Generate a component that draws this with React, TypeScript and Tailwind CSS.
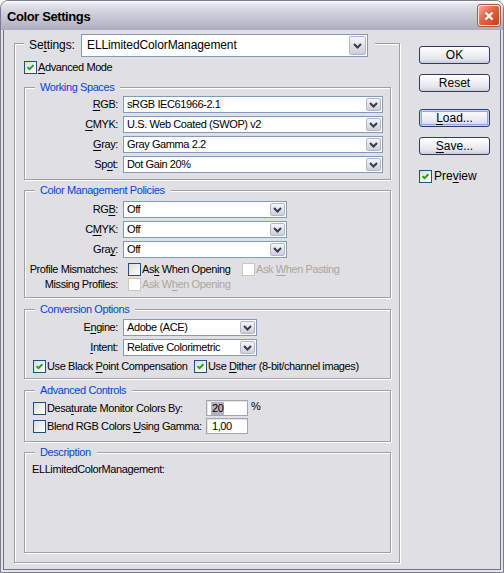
import React from "react";

type C = { children?: React.ReactNode };

const U = ({ children }: C) => (
  <span className="underline decoration-1 underline-offset-[2px]">{children}</span>
);

function Chevron() {
  return (
    <svg width="9" height="6" viewBox="0 0 9 6" className="block">
      <path d="M1 1L4.5 4.5L8 1" fill="none" stroke="#3a3a48" strokeWidth="2" />
    </svg>
  );
}

function Combo({
  value,
  className = "",
  textClass = "pl-[2px]",
  btnClass = "w-[15px]",
}: {
  value: React.ReactNode;
  className?: string;
  textClass?: string;
  btnClass?: string;
}) {
  return (
    <div className={`flex shrink-0 border border-[#7f9db9] bg-white p-[1px] ${className}`}>
      <div className={`flex min-w-0 flex-1 items-center overflow-hidden whitespace-nowrap ${textClass}`}>
        {value}
      </div>
      <div
        className={`flex items-center justify-center rounded-[2px] border border-[#b3b6cb] bg-gradient-to-b from-[#f6f6f9] to-[#cdcedd] ${btnClass}`}
      >
        <Chevron />
      </div>
    </div>
  );
}

function Check({ checked = false, disabled = false }: { checked?: boolean; disabled?: boolean }) {
  return (
    <span
      className={`flex h-[13px] w-[13px] shrink-0 items-center justify-center border ${
        disabled
          ? "border-[#cac8bb] bg-white"
          : "border-[#1c5180] bg-gradient-to-br from-[#dcdcd7] to-white"
      }`}
    >
      {checked && (
        <svg width="7" height="7" viewBox="0 0 7 7" className="block">
          <path d="M0.5 3.2L2.5 5.2L6.5 1.2" fill="none" stroke="#21a121" strokeWidth="2" />
        </svg>
      )}
    </span>
  );
}

function Group({
  title,
  className = "",
  children,
}: {
  title: string;
  className?: string;
  children?: React.ReactNode;
}) {
  return (
    <div
      className={`ml-[9px] w-[367px] shrink-0 border border-[#a0a0a4] shadow-[inset_1px_1px_0_#ffffff,1px_1px_0_#ffffff] ${className}`}
    >
      <div className="-mt-[7px] ml-[10px] w-fit bg-[#e0dfe3] pl-[5px] pr-[6px] leading-[13px] text-[#0046d5]">
        {title}
      </div>
      {children}
    </div>
  );
}

function Row({ label, children, className = "" }: { label: React.ReactNode; children?: React.ReactNode; className?: string }) {
  return (
    <div className={`flex items-center ${className}`}>
      <div className="w-[93px] shrink-0 text-right whitespace-nowrap">{label}</div>
      {children}
    </div>
  );
}

function Btn({ children, focus = false, className = "" }: { children: React.ReactNode; focus?: boolean; className?: string }) {
  return (
    <div
      className={`flex h-[18px] w-[71px] items-center justify-center rounded-[3px] border border-[#2b3f66] bg-[linear-gradient(to_bottom,#ffffff_0%,#f4f4f7_35%,#e2e2ea_80%,#c9c9d8_100%)] leading-none ${
        focus ? "shadow-[inset_0_0_0_1px_#c5d2f4,inset_0_0_0_2px_#90a8e4]" : ""
      } ${className}`}
    >
      {children}
    </div>
  );
}

export default function App() {
  return (
    <div className="flex h-[573px] w-[504px] select-none flex-col overflow-hidden rounded-t-[8px] border border-[#7b7b91] bg-[#e4e4eb] font-['Liberation_Sans',Arial,sans-serif] text-[11px] leading-[13px] tracking-[-0.4px] text-black">
      {/* Title bar */}
      <div className="flex h-[29px] shrink-0 items-center bg-[linear-gradient(to_bottom,#ffffff_0px,#e6e6ed_3px,#d6d6e0_9px,#c5c5d4_17px,#b7b7c9_24px,#acacc0_29px)] pl-[6px] pr-[3px]">
        <div className="flex-1 pt-[1px] text-[13px] font-bold tracking-[-0.4px] text-black">Color Settings</div>
        <div className="flex h-[21px] w-[22px] items-center justify-center rounded-[3px] border border-[#fbe7e2] bg-[linear-gradient(135deg,#f3ae98_0%,#e2694c_40%,#c63c1d_100%)] shadow-[0_0_0_1px_#a8564a]">
          <svg width="10" height="10" viewBox="0 0 10 10" className="block">
            <path d="M1.5 1.5L8.5 8.5M8.5 1.5L1.5 8.5" stroke="#ffffff" strokeWidth="2.2" />
          </svg>
        </div>
      </div>

      {/* Body */}
      <div className="mx-[2px] mb-[2px] flex flex-1 border-x border-b border-[#6f6f87] bg-[#e0dfe3]">
        {/* Main group */}
        <div className="ml-[10px] mt-[13px] flex h-[520px] w-[386px] shrink-0 flex-col border border-[#a0a0a4] shadow-[inset_1px_1px_0_#ffffff,1px_1px_0_#ffffff]">
          {/* Settings legend */}
          <div className="-mt-[10px] ml-[9px] flex h-[23px] w-fit items-center bg-[#e0dfe3] pl-[5px] pr-[7px] text-[12px] tracking-[-0.1px]">
            <div className="w-[52px] shrink-0">
              Se<U>t</U>tings:
            </div>
            <Combo
              value="ELLimitedColorManagement"
              className="h-[23px] w-[287px]"
              textClass="pl-[4px]"
              btnClass="w-[17px]"
            />
          </div>

          <div className="ml-[9px] mt-[4px] flex h-[13px] items-center">
            <Check checked />
            <span className="ml-[1px]">
              <U>A</U>dvanced Mode
            </span>
          </div>

          {/* Working Spaces */}
          <Group title="Working Spaces" className="mt-[13px] h-[93px]">
            <div className="mt-[2px] flex flex-col gap-[3px]">
              <Row label={<><U>R</U>GB:</>}>
                <Combo value="sRGB IEC61966-2.1" className="ml-[5px] h-[17px] w-[260px]" />
              </Row>
              <Row label={<><U>C</U>MYK:</>}>
                <Combo value="U.S. Web Coated (SWOP) v2" className="ml-[5px] h-[17px] w-[260px]" />
              </Row>
              <Row label={<><U>G</U>ray:</>}>
                <Combo value="Gray Gamma 2.2" className="ml-[5px] h-[17px] w-[260px]" />
              </Row>
              <Row label={<>Sp<U>o</U>t:</>}>
                <Combo value="Dot Gain 20%" className="ml-[5px] h-[17px] w-[260px]" />
              </Row>
            </div>
          </Group>

          {/* Color Management Policies */}
          <Group title="Color Management Policies" className="mt-[10px] h-[108px]">
            <div className="mt-[4px] flex flex-col gap-[3px]">
              <Row label={<>RG<U>B</U>:</>}>
                <Combo value="Off" className="ml-[5px] h-[17px] w-[164px]" />
              </Row>
              <Row label={<>C<U>M</U>YK:</>}>
                <Combo value="Off" className="ml-[5px] h-[17px] w-[164px]" />
              </Row>
              <Row label={<>Gra<U>y</U>:</>}>
                <Combo value="Off" className="ml-[5px] h-[17px] w-[164px]" />
              </Row>
            </div>
            <Row label="Profile Mismatches:" className="mt-[5px] h-[13px]">
              <div className="ml-[10px] flex w-[114px] shrink-0 items-center">
                <Check />
                <span className="ml-[1px] whitespace-nowrap">
                  As<U>k</U> When Opening
                </span>
              </div>
              <div className="flex items-center text-[#aca899]">
                <Check disabled />
                <span className="ml-[1px] whitespace-nowrap">
                  Ask <U>W</U>hen Pasting
                </span>
              </div>
            </Row>
            <Row label="Missing Profiles:" className="mt-[2px] h-[13px]">
              <div className="ml-[10px] flex items-center text-[#aca899]">
                <Check disabled />
                <span className="ml-[1px] whitespace-nowrap">
                  Ask W<U>h</U>en Opening
                </span>
              </div>
            </Row>
          </Group>

          {/* Conversion Options */}
          <Group title="Conversion Options" className="mt-[11px] h-[70px]">
            <div className="mt-[3px] flex flex-col gap-[3px]">
              <Row label={<>E<U>n</U>gine:</>}>
                <Combo value="Adobe (ACE)" className="ml-[5px] h-[17px] w-[134px]" />
              </Row>
              <Row label={<><U>I</U>ntent:</>}>
                <Combo value="Relative Colorimetric" className="ml-[5px] h-[17px] w-[134px]" />
              </Row>
            </div>
            <div className="ml-[8px] mt-[4px] flex h-[13px] items-center">
              <div className="flex w-[161px] shrink-0 items-center">
                <Check checked />
                <span className="ml-[1px] whitespace-nowrap">
                  Use Black <U>P</U>oint Compensation
                </span>
              </div>
              <div className="flex items-center">
                <Check checked />
                <span className="ml-[1px] whitespace-nowrap">
                  Use <U>D</U>ither (8-bit/channel images)
                </span>
              </div>
            </div>
          </Group>

          {/* Advanced Controls */}
          <Group title="Advanced Controls" className="mt-[11px] h-[52px]">
            <div className="ml-[8px] mt-[3px] flex h-[16px] items-center">
              <div className="flex w-[173px] shrink-0 items-center">
                <Check />
                <span className="ml-[1px] whitespace-nowrap">
                  Desa<U>t</U>urate Monitor Colors By:
                </span>
              </div>
              <div className="flex h-[16px] w-[42px] items-center border border-[#a5a5ab] bg-white pl-[4px] shadow-[inset_1px_1px_0_#e4e4e4]">
                <span className="bg-[#b3b4bf] px-[1px]">20</span>
              </div>
              <span className="ml-[3px] self-start">%</span>
            </div>
            <div className="ml-[8px] mt-[2px] flex h-[16px] items-center">
              <div className="flex w-[173px] shrink-0 items-center">
                <Check />
                <span className="ml-[1px] whitespace-nowrap">
                  Blend RGB Colors <U>U</U>sing Gamma:
                </span>
              </div>
              <div className="flex h-[16px] w-[42px] items-center border border-[#a5a5ab] bg-white pl-[5px] shadow-[inset_1px_1px_0_#e4e4e4]">
                1,00
              </div>
            </div>
          </Group>

          {/* Description */}
          <Group title="Description" className="mt-[10px] h-[101px]">
            <div className="ml-[7px] mt-[4px]">ELLimitedColorManagement:</div>
          </Group>
        </div>

        {/* Buttons */}
        <div className="ml-[19px] mt-[16px] flex w-[71px] shrink-0 flex-col text-[12px] tracking-normal">
          <Btn>OK</Btn>
          <Btn className="mt-[10px]">Reset</Btn>
          <Btn className="mt-[17px]" focus>
            <span>
              <U>L</U>oad...
            </span>
          </Btn>
          <Btn className="mt-[10px]">
            <span>
              <U>S</U>ave...
            </span>
          </Btn>
          <div className="mt-[15px] flex h-[13px] items-center">
            <Check checked />
            <span className="ml-[2px] whitespace-nowrap">
              Pre<U>v</U>iew
            </span>
          </div>
        </div>
      </div>
    </div>
  );
}
